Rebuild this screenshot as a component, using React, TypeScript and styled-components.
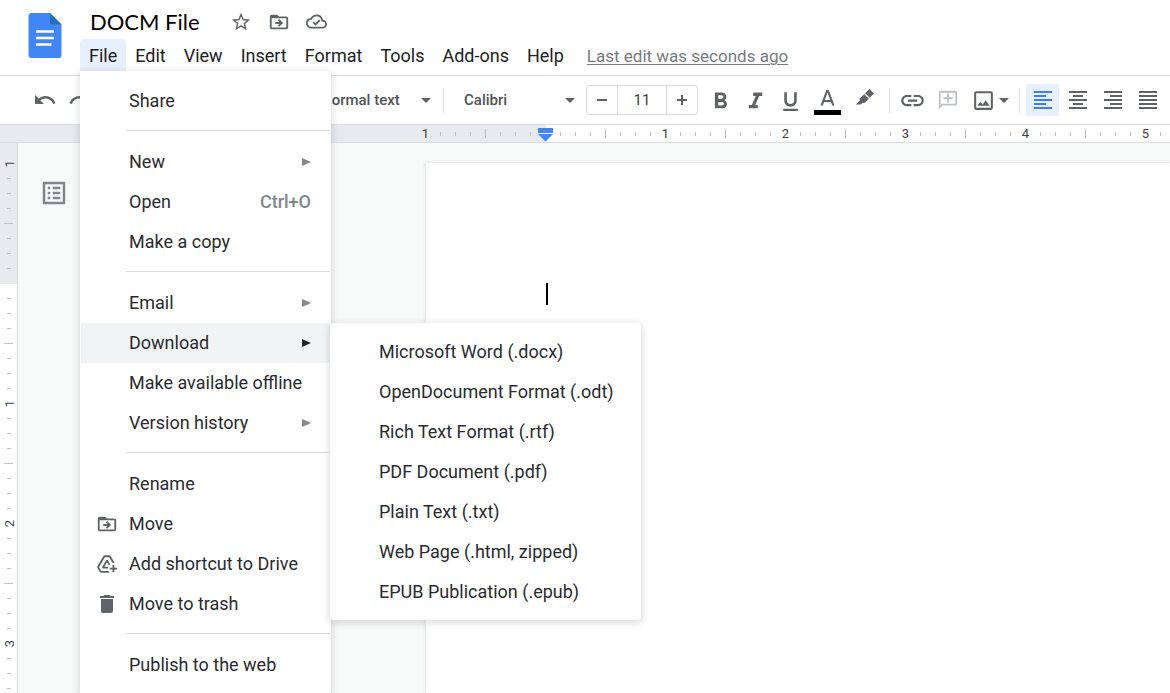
import React from "react";
import styled, { createGlobalStyle, css } from "styled-components";
import {
  MdAddToDrive,
  MdDelete,
  MdFormatAlignCenter,
  MdFormatAlignJustify,
  MdFormatAlignLeft,
  MdFormatAlignRight,
  MdFormatBold,
  MdFormatItalic,
  MdFormatUnderlined,
  MdLink,
  MdListAlt,
  MdOutlineAddComment,
  MdOutlineImage,
  MdRedo,
  MdStarBorder,
  MdUndo,
} from "react-icons/md";

const GlobalStyle = createGlobalStyle`
  * { box-sizing: border-box; }
  body {
    margin: 0;
    overflow: hidden;
    background: #fff;
    color: #202124;
    font-family: Roboto, "Liberation Sans", sans-serif;
  }
  button, input, select {
    font: inherit;
    color: inherit;
    margin: 0;
    padding: 0;
    border: 0;
    background: none;
    outline: none;
  }
  svg { display: block; flex: none; }
`;

const INCH = 120;
const STEP = INCH / 8;

const Shell = styled.div`
  display: flex;
  flex-direction: column;
  height: 100vh;
`;

/* ---------- header ---------- */

const Header = styled.header`
  display: flex;
  gap: 18px;
  height: 76px;
  flex: none;
  padding-left: 28px;
  border-bottom: 1px solid #dadce0;
`;

const Logo = styled.a`
  margin-top: 13px;
`;

const HeadColumn = styled.div`
  display: flex;
  flex-direction: column;
  flex: 1;
`;

const TitleRow = styled.div`
  display: flex;
  align-items: center;
  gap: 16px;
  height: 39px;
  padding: 4px 0 0 10px;
`;

const TitleInput = styled.input`
  width: 124px;
  font-family: Lato, Roboto, sans-serif;
  font-size: 22px;
  line-height: 30px;
  color: #000;
`;

const PlainButton = styled.button`
  display: flex;
  align-items: center;
  justify-content: center;
  color: #5f6368;
`;

const MenuBar = styled.nav`
  display: flex;
  height: 32px;
  font-size: 18px;
`;

const MenuSlot = styled.div`
  position: relative;
`;

const MenuButton = styled.button<{ $open?: boolean }>`
  height: 32px;
  padding: 0 9px;
  border-radius: 4px 4px 0 0;
  background: ${(p) => (p.$open ? "#e8f0fe" : "transparent")};
`;

const LastEdit = styled.a`
  margin-left: 14px;
  font-size: 17px;
  line-height: 34px;
  color: #777b80;
  text-decoration: underline;
  text-decoration-thickness: 1px;
  text-underline-offset: 2px;
`;

/* ---------- menus ---------- */

const panel = css`
  position: absolute;
  background: #fff;
  border-radius: 4px;
  box-shadow: 0 2px 6px 2px rgba(60, 64, 67, 0.15);
`;

const Menu = styled.div`
  ${panel}
  top: 100%;
  left: 0;
  z-index: 10;
  width: 251px;
  padding: 10px 1px;
  border-radius: 0 4px 4px 4px;
`;

const SubMenu = styled.div`
  ${panel}
  top: 0;
  left: 100%;
  width: 311px;
  padding: 9px 0 8px;
`;

const ItemWrap = styled.div`
  position: relative;
`;

const Item = styled.button<{ $active?: boolean }>`
  display: flex;
  align-items: center;
  width: 100%;
  height: 40px;
  padding-right: 19px;
  text-align: left;
  white-space: nowrap;
  color: #292b2f;
  background: ${(p) => (p.$active ? "#f1f3f4" : "transparent")};
  svg { color: ${(p) => (p.$active ? "#202124" : "#85888c")}; }
`;

const ItemIcon = styled.span`
  display: flex;
  justify-content: center;
  width: 48px;
  flex: none;
  padding-left: 4px;
  && svg { color: #5f6368; }
`;

const ItemLabel = styled.span`
  flex: 1;
  padding-bottom: 2px;
`;

const Shortcut = styled.span`
  padding-bottom: 2px;
  font-weight: 500;
  color: #80868b;
`;

const SubItem = styled(Item)`
  padding-left: 49px;
`;

const Separator = styled.hr`
  height: 1px;
  margin: 9px 0 11px 45px;
  border: 0;
  background: #dadce0;
`;

/* ---------- toolbar ---------- */

const Toolbar = styled.div`
  display: flex;
  align-items: center;
  gap: 2px;
  height: 49px;
  flex: none;
  padding-left: 28px;
  border-bottom: 1px solid #dadce0;
  font-size: 15px;
  font-weight: 500;
  color: #505357;
`;

const HistoryGroup = styled.div`
  display: flex;
  gap: 2px;
  width: 291px;
  flex: none;
`;

const ToolButton = styled.button<{ $on?: boolean; $wide?: boolean; $low?: boolean }>`
  display: flex;
  align-items: center;
  justify-content: center;
  flex: none;
  width: ${(p) => (p.$wide ? 36 : 33)}px;
  height: 32px;
  padding-top: ${(p) => (p.$low ? 2 : 0)}px;
  border-radius: 2px;
  color: ${(p) => (p.$on ? "#3b80ec" : "#5f6368")};
  background: ${(p) => (p.$on ? "#e8f0fe" : "transparent")};
`;

const CommentButton = styled(ToolButton)`
  color: #bdc1c6;
  svg { transform: scaleX(-1); }
`;

const ImageButton = styled(ToolButton)`
  width: 47px;
  gap: 3px;
`;

const Divider = styled.span`
  width: 1px;
  height: 25px;
  flex: none;
  margin: 0 4px;
  background: #dadce0;
`;

const SelectBox = styled.label<{ $width: number }>`
  display: grid;
  align-items: center;
  flex: none;
  width: ${(p) => p.$width}px;
  margin-right: 6px;
  > * { grid-area: 1 / 1; }
  > svg { justify-self: end; pointer-events: none; }
`;

const Select = styled.select`
  appearance: none;
  width: 100%;
  height: 32px;
`;

const FontSelectBox = styled(SelectBox)`
  margin: 0 9px 0 14px;
`;

const SizeBox = styled.div`
  display: flex;
  flex: none;
  width: 112px;
  height: 30px;
  margin-right: 4px;
  border: 1px solid #dadce0;
  border-radius: 3px;
`;

const SizeButton = styled.button`
  display: flex;
  align-items: center;
  justify-content: center;
  width: 30px;
`;

const SizeInput = styled.input`
  flex: 1;
  min-width: 0;
  text-align: center;
  font-weight: 400;
  color: #3c4043;
  border: solid #dadce0;
  border-width: 0 1px;
`;

/* ---------- rulers ---------- */

const HRuler = styled.div`
  display: flex;
  position: relative;
  height: 18px;
  flex: none;
  border-bottom: 1px solid #dadce0;
  overflow: hidden;
  font-size: 13px;
  color: #444;
`;

const HMargin = styled.div`
  display: flex;
  justify-content: flex-end;
  flex: none;
  width: 546px;
  background: #e8eaed;
`;

const HCell = styled.span`
  display: flex;
  align-items: center;
  justify-content: center;
  flex: none;
  width: ${STEP}px;
  height: 17px;
`;

const HTick = styled.i<{ $major: boolean }>`
  width: 1px;
  height: ${(p) => (p.$major ? 9 : 4)}px;
  background: #bdc1c6;
`;

const HScale = styled.div`
  display: flex;
  flex: 1;
  padding-left: 7px;
`;

const HMarginScale = styled.div`
  display: flex;
  margin-right: 8px;
`;

const Indent = styled.svg`
  position: absolute;
  top: 3px;
  left: 538px;
`;

const VRuler = styled.div`
  display: flex;
  flex-direction: column;
  flex: none;
  width: 18px;
  border-right: 1px solid #dadce0;
  background: #fff;
  overflow: hidden;
  font-size: 13px;
  color: #444;
`;

const VMargin = styled.div`
  flex: none;
  height: 141px;
  padding-top: 13px;
  background: #e8eaed;
`;

const VScale = styled.div`
  padding-top: 7px;
`;

const VCell = styled.span`
  display: flex;
  align-items: center;
  justify-content: center;
  height: ${STEP}px;
  b {
    padding-top: 2px;
    font-weight: 400;
    line-height: 15px;
    transform: rotate(-90deg);
  }
`;

const VTick = styled.i<{ $major: boolean }>`
  width: ${(p) => (p.$major ? 9 : 4)}px;
  height: 1px;
  background: #bdc1c6;
`;

/* ---------- document ---------- */

const Workspace = styled.div`
  display: flex;
  flex: 1;
  min-height: 0;
  background: #f8faf9;
`;

const Canvas = styled.main`
  display: flex;
  flex: 1;
  min-width: 0;
  padding-top: 20px;
  overflow: hidden;
`;

const OutlineRail = styled.aside`
  flex: none;
  width: 408px;
  padding: 15px 0 0 21px;
`;

const OutlineButton = styled(PlainButton)`
  color: #80868b;
`;

const Page = styled.article`
  flex: 1;
  padding: ${INCH}px;
  background: #fff;
  box-shadow: 0 0 3px 1px rgba(60, 64, 67, 0.12);
`;

const Caret = styled.span`
  display: block;
  width: 2px;
  height: 22px;
  background: #000;
`;

/* ---------- drawings ---------- */

const DocsLogo = () => (
  <svg width="34" height="45" viewBox="0 0 34 45">
    <path d="M3.500 0H22L33.500 11.500V41.500A3.300 3.300 0 0 1 30.200 45H3.500A3.300 3.300 0 0 1 .5 41.500V3.500A3.300 3.300 0 0 1 3.500 0Z" fill="#4285f4" />
    <path d="M22 0L33.500 11.500H24.500A2.500 2.500 0 0 1 22 9Z" fill="#2470bd" />
    <path d="M8 17.200h18v2.500H8zM8 23.700h18v2.500H8zM8 30.200h15.500v2.500H8z" fill="#fff" />
  </svg>
);

const FolderMove = ({ size }: { size: number }) => (
  <svg width={size} height={size} viewBox="0 0 24 24" fill="currentColor">
    <path d="M20 6h-8l-2-2H4c-1.100 0-2 .9-2 2v12c0 1.100.9 2 2 2h16c1.100 0 2-.9 2-2V8c0-1.100-.9-2-2-2zm0 12H4V8h16v10z" />
    <path d="M12.200 8.700l4.300 4.300-4.300 4.300-1.500-1.500 1.700-1.700H8v-2.200h4.400l-1.700-1.700z" />
  </svg>
);

const CloudSaved = () => (
  <svg width="21" height="21" viewBox="0 0 24 24">
    <path
      fill="#5f6368"
      fillRule="evenodd"
      d="M19.350 10.040A7.490 7.490 0 0 0 12 4C9.110 4 6.600 5.640 5.350 8.040A5.994 5.994 0 0 0 0 14c0 3.310 2.690 6 6 6h13c2.760 0 5-2.240 5-5 0-2.640-2.050-4.780-4.650-4.960zM19 18H6c-2.210 0-4-1.790-4-4 0-2.050 1.530-3.760 3.560-3.970l1.070-.11.5-.95A5.469 5.469 0 0 1 12 6c2.620 0 4.880 1.860 5.390 4.430l.3 1.500 1.530.11A2.980 2.980 0 0 1 22 15c0 1.650-1.350 3-3 3z"
    />
    <path d="M8.300 12.600l2.700 2.700 4.700-4.800" fill="none" stroke="#5f6368" strokeWidth="2" />
  </svg>
);

const DropArrow = () => (
  <svg width="10" height="5" viewBox="0 0 10 5" fill="#5f6368">
    <path d="M0 0h10L5 5z" />
  </svg>
);

const SideArrow = () => (
  <svg width="9" height="8" viewBox="0 0 9 8" fill="currentColor">
    <path d="M0 0l9 4-9 4z" />
  </svg>
);

const Minus = () => (
  <svg width="10" height="10" viewBox="0 0 10 10" fill="#5f6368">
    <path d="M0 4h10v2H0z" />
  </svg>
);

const Plus = () => (
  <svg width="10" height="10" viewBox="0 0 10 10" fill="#5f6368">
    <path d="M0 4h4V0h2v4h4v2H6v4H4V6H0z" />
  </svg>
);

const TextColor = () => (
  <svg width="27" height="30" viewBox="0 0 27 30">
    <path d="M12.300 5L6.500 20.500h2.300l1.300-3.500h6.800l1.300 3.500h2.300L14.700 5zM10.800 15l2.700-7.400L16.200 15z" fill="#5f6368" />
    <path d="M0 25h27v5H0z" fill="#000" />
  </svg>
);

const Highlighter = () => (
  <svg width="20" height="22" viewBox="0 0 20 22" fill="#5f6368">
    <path d="M14.400 0L19 4.600l-4.200 4.200-4.600-4.600z" />
    <path d="M9.300 5.200l4.600 4.600-3.500 3.500c-.8.800-1.900.9-2.800.4L6 15.500H.8l4-4.100c-.4-.9-.2-1.900.5-2.600z" />
  </svg>
);

/* ---------- data ---------- */

type Entry = {
  label: string;
  icon?: React.ReactNode;
  shortcut?: string;
  arrow?: boolean;
  children?: string[];
};

const fileMenu: Entry[][] = [
  [{ label: "Share" }],
  [{ label: "New", arrow: true }, { label: "Open", shortcut: "Ctrl+O" }, { label: "Make a copy" }],
  [
    { label: "Email", arrow: true },
    {
      label: "Download",
      arrow: true,
      children: [
        "Microsoft Word (.docx)",
        "OpenDocument Format (.odt)",
        "Rich Text Format (.rtf)",
        "PDF Document (.pdf)",
        "Plain Text (.txt)",
        "Web Page (.html, zipped)",
        "EPUB Publication (.epub)",
      ],
    },
    { label: "Make available offline" },
    { label: "Version history", arrow: true },
  ],
  [
    { label: "Rename" },
    { label: "Move", icon: <FolderMove size={22} /> },
    { label: "Add shortcut to Drive", icon: <MdAddToDrive size={22} /> },
    { label: "Move to trash", icon: <MdDelete size={24} /> },
  ],
  [{ label: "Publish to the web" }],
];

const otherMenus = ["Edit", "View", "Insert", "Format", "Tools", "Add-ons", "Help"];

const range = (from: number, to: number) =>
  Array.from({ length: to - from + 1 }, (_, i) => from + i);

const HMark = ({ n }: { n: number }) => (
  <HCell>{n % 8 === 0 ? Math.abs(n / 8) : <HTick $major={n % 4 === 0} />}</HCell>
);

const VMark = ({ n }: { n: number }) => (
  <VCell>{n % 8 === 0 ? <b>{Math.abs(n / 8)}</b> : <VTick $major={n % 4 === 0} />}</VCell>
);

const FileMenu = () => (
  <Menu role="menu" aria-label="File">
    {fileMenu.map((group, g) => (
      <React.Fragment key={g}>
        {g > 0 && <Separator />}
        {group.map((entry) => (
          <ItemWrap key={entry.label}>
            <Item role="menuitem" $active={!!entry.children}>
              <ItemIcon>{entry.icon}</ItemIcon>
              <ItemLabel>{entry.label}</ItemLabel>
              {entry.shortcut && <Shortcut>{entry.shortcut}</Shortcut>}
              {entry.arrow && <SideArrow />}
            </Item>
            {entry.children && (
              <SubMenu role="menu" aria-label={entry.label}>
                {entry.children.map((label) => (
                  <SubItem key={label} role="menuitem">
                    <ItemLabel>{label}</ItemLabel>
                  </SubItem>
                ))}
              </SubMenu>
            )}
          </ItemWrap>
        ))}
      </React.Fragment>
    ))}
  </Menu>
);

export default function App() {
  return (
    <Shell>
      <GlobalStyle />
      <Header>
        <Logo href="#" aria-label="Docs home"><DocsLogo /></Logo>
        <HeadColumn>
          <TitleRow>
            <TitleInput aria-label="Document title" defaultValue="DOCM File" />
            <PlainButton aria-label="Star"><MdStarBorder size={22} /></PlainButton>
            <PlainButton aria-label="Move"><FolderMove size={22} /></PlainButton>
            <PlainButton aria-label="Saved to Drive"><CloudSaved /></PlainButton>
          </TitleRow>
          <MenuBar>
            <MenuSlot>
              <MenuButton $open aria-expanded="true">File</MenuButton>
              <FileMenu />
            </MenuSlot>
            {otherMenus.map((name) => (
              <MenuButton key={name}>{name}</MenuButton>
            ))}
            <LastEdit href="#">Last edit was seconds ago</LastEdit>
          </MenuBar>
        </HeadColumn>
      </Header>

      <Toolbar role="toolbar">
        <HistoryGroup>
          <ToolButton aria-label="Undo"><MdUndo size={24} /></ToolButton>
          <ToolButton aria-label="Redo"><MdRedo size={24} /></ToolButton>
        </HistoryGroup>
        <SelectBox $width={110}>
          <Select aria-label="Paragraph style"><option>Normal text</option></Select>
          <DropArrow />
        </SelectBox>
        <Divider />
        <FontSelectBox $width={111}>
          <Select aria-label="Font"><option>Calibri</option></Select>
          <DropArrow />
        </FontSelectBox>
        <SizeBox>
          <SizeButton aria-label="Decrease font size"><Minus /></SizeButton>
          <SizeInput aria-label="Font size" defaultValue="11" />
          <SizeButton aria-label="Increase font size"><Plus /></SizeButton>
        </SizeBox>
        <ToolButton $low aria-label="Bold"><MdFormatBold size={27} /></ToolButton>
        <ToolButton $low aria-label="Italic"><MdFormatItalic size={27} /></ToolButton>
        <ToolButton $low aria-label="Underline"><MdFormatUnderlined size={25} /></ToolButton>
        <ToolButton $wide aria-label="Text color"><TextColor /></ToolButton>
        <ToolButton $wide aria-label="Highlight color"><Highlighter /></ToolButton>
        <Divider />
        <ToolButton aria-label="Insert link"><MdLink size={27} /></ToolButton>
        <CommentButton aria-label="Add comment"><MdOutlineAddComment size={22} /></CommentButton>
        <ImageButton aria-label="Insert image"><MdOutlineImage size={25} /><DropArrow /></ImageButton>
        <Divider />
        <ToolButton $on aria-label="Align left"><MdFormatAlignLeft size={24} /></ToolButton>
        <ToolButton aria-label="Align center"><MdFormatAlignCenter size={24} /></ToolButton>
        <ToolButton aria-label="Align right"><MdFormatAlignRight size={24} /></ToolButton>
        <ToolButton aria-label="Justify"><MdFormatAlignJustify size={24} /></ToolButton>
      </Toolbar>

      <HRuler>
        <HMargin>
          <HMarginScale>{range(-8, -1).map((n) => <HMark key={n} n={n} />)}</HMarginScale>
        </HMargin>
        <HScale>{range(1, 47).map((n) => <HMark key={n} n={n} />)}</HScale>
        <Indent width="15" height="14" viewBox="0 0 15 14" fill="#4285f4">
          <path d="M0 0h15v5H0zM0 6h15l-7.500 7.500z" />
        </Indent>
      </HRuler>

      <Workspace>
        <VRuler>
          <VMargin>{range(-8, -1).map((n) => <VMark key={n} n={n} />)}</VMargin>
          <VScale>{range(1, 31).map((n) => <VMark key={n} n={n} />)}</VScale>
        </VRuler>
        <Canvas>
          <OutlineRail>
            <OutlineButton aria-label="Show outline"><MdListAlt size={30} /></OutlineButton>
          </OutlineRail>
          <Page><Caret /></Page>
        </Canvas>
      </Workspace>
    </Shell>
  );
}
